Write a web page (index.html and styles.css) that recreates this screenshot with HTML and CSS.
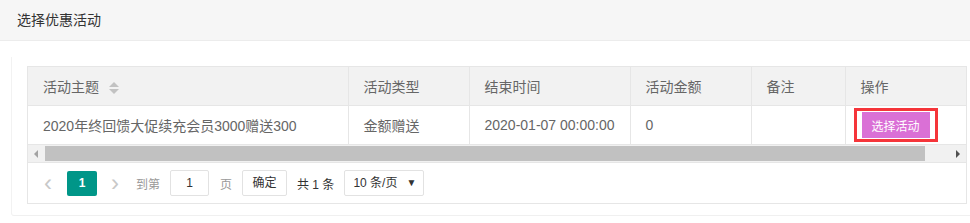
FILE: index.html
```html
<!DOCTYPE html>
<html>
  <head>
    <meta charset="utf-8" />
    <title>选择优惠活动</title>
    <link rel="stylesheet" href="styles.css">
  </head>
  <body>
    <div class="page-header">选择优惠活动</div>
    <div class="card">
      <div class="table-box">
        <table class="data-table">
          <colgroup>
            <col class="col-subject" />
            <col class="col-type" />
            <col class="col-end" />
            <col class="col-amount" />
            <col class="col-note" />
            <col class="col-op" />
          </colgroup>
          <thead>
            <tr>
              <th class="fixed-left">活动主题 <span class="sort"><i class="up"></i><i class="down"></i></span></th>
              <th>活动类型</th>
              <th>结束时间</th>
              <th>活动金额</th>
              <th>备注</th>
              <th class="fixed-right">操作</th>
            </tr>
          </thead>
          <tbody>
            <tr>
              <td class="fixed-left">2020年终回馈大促续充会员3000赠送300</td>
              <td>金额赠送</td>
              <td>2020-01-07 00:00:00</td>
              <td>0</td>
              <td></td>
              <td class="fixed-right">
                <span class="highlight"><button type="button" class="pick-btn">选择活动</button></span>
              </td>
            </tr>
          </tbody>
        </table>
        <div class="scrollbar">
          <span class="arrow left"></span>
          <div class="track"><div class="thumb"></div></div>
          <span class="arrow right"></span>
        </div>
        <div class="pager">
          <span class="pg-arrow">&lsaquo;</span>
          <span class="pg-current">1</span>
          <span class="pg-arrow next">&rsaquo;</span>
          <span class="pg-label">到第</span>
          <span class="pg-input">1</span>
          <span class="pg-label">页</span>
          <span class="pg-ok">确定</span>
          <span class="pg-count">共 1 条</span>
          <span class="pg-select">10 条/页 <span class="caret">&#9660;</span></span>
        </div>
      </div>
    </div>
  </body>
</html>
```

FILE: styles.css
```css
body {
  margin: 0;
  padding: 0;
  background: #fff;
  font-family: "Liberation Sans", "Noto Sans CJK SC", sans-serif;
  font-size: 14px;
  color: #666;
}

.page-header {
  height: 40px;
  line-height: 40px;
  padding-left: 17px;
  background-color: #f6f6f6;
  border-bottom: 1px solid #ececec;
  color: #333;
}

.card {
  margin: 16px 0 0 11px;
  padding: 9px 3px 11px 15px;
  border-left: 1px solid #f2f2f2;
  border-bottom: 1px solid #f0f0f0;
  border-radius: 0 0 0 3px;
}

.table-box {
  width: 938px;
  border: 1px solid #e6e6e6;
}

.data-table {
  width: 938px;
  border-collapse: collapse;
  table-layout: fixed;
}

.col-subject { width: 320px; }
.col-type { width: 121px; }
.col-end { width: 161px; }
.col-amount { width: 121px; }
.col-note { width: 94px; }
.col-op { width: 121px; }

.data-table th,
.data-table td {
  height: 38px;
  padding: 0 15px;
  border-right: 1px solid #e6e6e6;
  border-bottom: 1px solid #e6e6e6;
  text-align: left;
  font-weight: normal;
  white-space: nowrap;
  overflow: hidden;
}

.data-table th {
  background-color: #f2f2f2;
}

.data-table th:last-child,
.data-table td:last-child {
  border-right: none;
}

.fixed-left {
  box-shadow: 2px 0 4px rgba(0, 0, 0, 0.06);
}

.fixed-right {
  box-shadow: -2px 0 4px rgba(0, 0, 0, 0.06);
}

.sort {
  display: inline-block;
  vertical-align: middle;
  margin-left: 6px;
  width: 10px;
  height: 14px;
  position: relative;
}

.sort i {
  position: absolute;
  left: 0;
  width: 0;
  height: 0;
  border-left: 5px solid transparent;
  border-right: 5px solid transparent;
}

.sort .up {
  top: 1px;
  border-bottom: 5px solid #c2c2c2;
}

.sort .down {
  top: 8px;
  border-top: 5px solid #c2c2c2;
}

.highlight {
  display: inline-block;
  margin-left: -7px;
  padding: 1px 5px;
  border: 3px solid #f5353a;
  line-height: 0;
}

.pick-btn {
  height: 26px;
  width: 68px;
  padding: 0;
  border: none;
  background-color: #da70d6;
  color: #fff;
  font-family: "Liberation Sans", "Noto Sans CJK SC", sans-serif;
  font-size: 12px;
}

.scrollbar {
  display: flex;
  align-items: center;
  height: 17px;
  background-color: #f1f1f1;
}

.arrow {
  width: 17px;
  height: 17px;
  position: relative;
}

.arrow::after {
  content: "";
  position: absolute;
  top: 5px;
  border-top: 4px solid transparent;
  border-bottom: 4px solid transparent;
}

.arrow.left::after {
  left: 6px;
  border-right: 4px solid #a3a3a3;
}

.arrow.right::after {
  left: 7px;
  border-left: 4px solid #505050;
}

.track {
  flex: 1;
  height: 15px;
}

.thumb {
  width: 880px;
  height: 15px;
  background-color: #c1c1c1;
}

.pager {
  display: flex;
  align-items: center;
  height: 40px;
  padding-left: 10px;
  border-top: 1px solid #e6e6e6;
  font-size: 12px;
  color: #333;
}

.pg-arrow {
  width: 20px;
  text-align: center;
  font-size: 24px;
  line-height: 22px;
  color: #c8c8c8;
}

.pg-arrow.next {
  margin-left: 8px;
}

.pg-current {
  width: 30px;
  height: 25px;
  line-height: 25px;
  margin-left: 9px;
  text-align: center;
  background-color: #009688;
  color: #fff;
  font-weight: bold;
  border-radius: 2px;
}

.pg-label {
  color: #999;
  margin: 0 10px 0 11px;
}

.pg-input {
  width: 37px;
  height: 24px;
  line-height: 24px;
  text-align: center;
  border: 1px solid #e2e2e2;
  border-radius: 2px;
}

.pg-ok {
  width: 43px;
  height: 24px;
  line-height: 24px;
  text-align: center;
  border: 1px solid #e2e2e2;
  border-radius: 2px;
}

.pg-count {
  margin: 0 10px;
}

.pg-select {
  display: flex;
  justify-content: space-between;
  width: 63px;
  height: 24px;
  line-height: 24px;
  padding: 0 7px 0 8px;
  border: 1px solid #e2e2e2;
  border-radius: 2px;
}

.caret {
  font-size: 10px;
}
```
